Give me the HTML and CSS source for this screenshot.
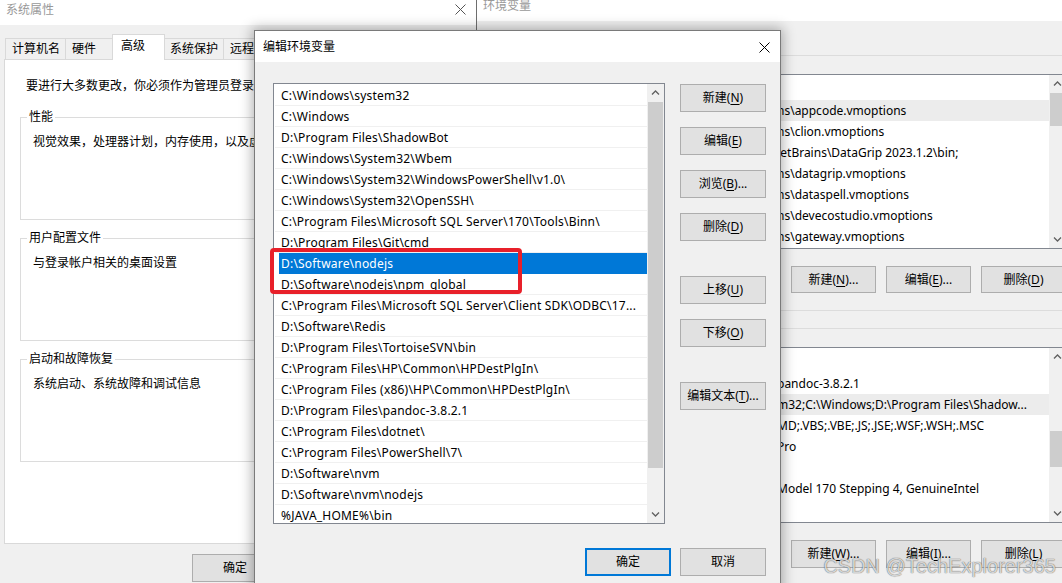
FILE: index.html
```html
<!DOCTYPE html>
<html lang="zh-CN">
  <head>
    <meta charset="UTF-8" />
    <meta name="viewport" content="width=device-width, initial-scale=1.0" />
    <title>编辑环境变量</title>
    <link rel="stylesheet" href="styles.css">
  </head>
  <body>
    <!-- 系统属性 -->
    <section class="win sys">
      <div class="titlebar">
        <span>系统属性</span>
        <svg class="close" width="11" height="11" viewBox="0 0 11 11"><path d="M0.5 0.5 10.5 10.5M10.5 0.5 0.5 10.5" stroke="#555" stroke-width="1"/></svg>
      </div>
      <div class="tabs">
        <div class="tab">计算机名</div>
        <div class="tab">硬件</div>
        <div class="tab active">高级</div>
        <div class="tab">系统保护</div>
        <div class="tab">远程</div>
      </div>
      <div class="panel">
        <p class="intro">要进行大多数更改，你必须作为管理员登录。</p>
        <fieldset class="group">
          <legend>性能</legend>
          <p>视觉效果，处理器计划，内存使用，以及虚拟内存</p>
        </fieldset>
        <fieldset class="group">
          <legend>用户配置文件</legend>
          <p>与登录帐户相关的桌面设置</p>
        </fieldset>
        <fieldset class="group">
          <legend>启动和故障恢复</legend>
          <p>系统启动、系统故障和调试信息</p>
        </fieldset>
      </div>
      <div class="sys-foot">
        <button class="btn wide">确定</button>
      </div>
    </section>

    <!-- 环境变量 -->
    <section class="win env">
      <div class="titlebar">
        <span>环境变量</span>
      </div>
      <div class="env-group first">
        <div class="vlist upper">
          <div class="vrows">
            <div class="vhead"><span class="vname">变量</span><span>值</span></div>
            <div class="vrow hl"><span class="vname">APPCODE_VM_OPTIONS</span><span>ns\appcode.vmoptions</span></div>
            <div class="vrow"><span class="vname">CLION_VM_OPTIONS</span><span>ns\clion.vmoptions</span></div>
            <div class="vrow"><span class="vname">DataGrip</span><span>JetBrains\DataGrip 2023.1.2\bin;</span></div>
            <div class="vrow"><span class="vname">DATAGRIP_VM_OPTIONS</span><span>ns\datagrip.vmoptions</span></div>
            <div class="vrow"><span class="vname">DATASPELL_VM_OPTIONS</span><span>ns\dataspell.vmoptions</span></div>
            <div class="vrow"><span class="vname">DEVECOSTUDIO_VM_OPTIONS</span><span>ns\devecostudio.vmoptions</span></div>
            <div class="vrow"><span class="vname">GATEWAY_VM_OPTIONS</span><span>ns\gateway.vmoptions</span></div>
          </div>
          <div class="sbar">
            <div class="arrow"><svg width="9" height="5" viewBox="0 0 9 5"><path d="M1 4.5 4.5 1 8 4.5" fill="none" stroke="#606060" stroke-width="1.3"/></svg></div>
            <div class="track"><div class="thumb t-upper"></div></div>
            <div class="arrow"><svg width="9" height="5" viewBox="0 0 9 5"><path d="M1 0.5 4.5 4 8 0.5" fill="none" stroke="#606060" stroke-width="1.3"/></svg></div>
          </div>
        </div>
        <div class="env-btns">
          <button class="btn">新建(<u>N</u>)...</button>
          <button class="btn">编辑(<u>E</u>)...</button>
          <button class="btn">删除(<u>D</u>)</button>
        </div>
      </div>
      <div class="env-group">
        <div class="vlist lower">
          <div class="vrows">
            <div class="vhead"><span class="vname">变量</span><span>值</span></div>
            <div class="vrow"><span class="vname">PANDOC_HOME</span><span>pandoc-3.8.2.1</span></div>
            <div class="vrow hl"><span class="vname">Path</span><span>m32;C:\Windows;D:\Program Files\Shadow...</span></div>
            <div class="vrow"><span class="vname">PATHEXT</span><span>MD;.VBS;.VBE;.JS;.JSE;.WSF;.WSH;.MSC</span></div>
            <div class="vrow"><span class="vname">POWERSHELL_DISTRIBUTION_CHANNEL</span><span>Pro</span></div>
            <div class="vrow"><span class="vname">PROCESSOR_ARCHITECTURE</span><span></span></div>
            <div class="vrow"><span class="vname">PROCESSOR_IDENTIFIER</span><span>Model 170 Stepping 4, GenuineIntel</span></div>
            <div class="vrow"><span class="vname">PROCESSOR_LEVEL</span><span></span></div>
          </div>
          <div class="sbar">
            <div class="arrow"><svg width="9" height="5" viewBox="0 0 9 5"><path d="M1 4.5 4.5 1 8 4.5" fill="none" stroke="#606060" stroke-width="1.3"/></svg></div>
            <div class="track"><div class="thumb t-lower"></div></div>
            <div class="arrow"><svg width="9" height="5" viewBox="0 0 9 5"><path d="M1 0.5 4.5 4 8 0.5" fill="none" stroke="#606060" stroke-width="1.3"/></svg></div>
          </div>
        </div>
        <div class="env-btns tall">
          <button class="btn">新建(<u>W</u>)...</button>
          <button class="btn">编辑(<u>I</u>)...</button>
          <button class="btn">删除(<u>L</u>)</button>
        </div>
      </div>
    </section>

    <!-- 编辑环境变量 -->
    <section class="dlg">
      <div class="dlg-title">
        <span>编辑环境变量</span>
        <svg class="close" width="11" height="11" viewBox="0 0 11 11"><path d="M0.5 0.5 10.5 10.5M10.5 0.5 0.5 10.5" stroke="#000" stroke-width="1"/></svg>
      </div>
      <div class="dlg-body">
        <div class="plist">
          <ul class="prows">
            <li>C:\Windows\system32</li>
            <li>C:\Windows</li>
            <li>D:\Program Files\ShadowBot</li>
            <li>C:\Windows\System32\Wbem</li>
            <li>C:\Windows\System32\WindowsPowerShell\v1.0\</li>
            <li>C:\Windows\System32\OpenSSH\</li>
            <li>C:\Program Files\Microsoft SQL Server\170\Tools\Binn\</li>
            <li>D:\Program Files\Git\cmd</li>
            <li class="sel">D:\Software\nodejs</li>
            <li>D:\Software\nodejs\npm_global</li>
            <li>C:\Program Files\Microsoft SQL Server\Client SDK\ODBC\17...</li>
            <li>D:\Software\Redis</li>
            <li>D:\Program Files\TortoiseSVN\bin</li>
            <li>C:\Program Files\HP\Common\HPDestPlgIn\</li>
            <li>C:\Program Files (x86)\HP\Common\HPDestPlgIn\</li>
            <li>D:\Program Files\pandoc-3.8.2.1</li>
            <li>C:\Program Files\dotnet\</li>
            <li>C:\Program Files\PowerShell\7\</li>
            <li>D:\Software\nvm</li>
            <li>D:\Software\nvm\nodejs</li>
            <li>%JAVA_HOME%\bin</li>
          </ul>
          <div class="sbar">
            <div class="arrow"><svg width="9" height="5" viewBox="0 0 9 5"><path d="M1 4.5 4.5 1 8 4.5" fill="none" stroke="#606060" stroke-width="1.3"/></svg></div>
            <div class="track"><div class="thumb t-path"></div></div>
            <div class="arrow"><svg width="9" height="5" viewBox="0 0 9 5"><path d="M1 0.5 4.5 4 8 0.5" fill="none" stroke="#606060" stroke-width="1.3"/></svg></div>
          </div>
        </div>
        <div class="side">
          <button class="btn">新建(<u>N</u>)</button>
          <button class="btn">编辑(<u>E</u>)</button>
          <button class="btn">浏览(<u>B</u>)...</button>
          <button class="btn">删除(<u>D</u>)</button>
          <button class="btn gap-lg">上移(<u>U</u>)</button>
          <button class="btn">下移(<u>O</u>)</button>
          <button class="btn gap-lg">编辑文本(<u>T</u>)...</button>
        </div>
      </div>
      <div class="dlg-foot">
        <button class="btn default">确定</button>
        <button class="btn">取消</button>
      </div>
    </section>

    <!-- 标注 -->
    <div class="mark"></div>
    <div class="watermark">CSDN @TechExplorer365</div>
  </body>
</html>
```

FILE: styles.css
```css
* {
  margin: 0;
  padding: 0;
  box-sizing: border-box;
}

ul {
  list-style: none;
}

body {
  width: 1062px;
  height: 583px;
  overflow: hidden;
  position: relative;
  background: #f0f0f0;
  color: #000;
  font: 12px/16px "Noto Sans", "Noto Sans CJK SC", sans-serif;
}

.btn {
  font: inherit;
  color: #000;
  background: #e1e1e1;
  border: 1px solid #adadad;
  width: 86px;
  height: 28px;
}

.btn u {
  text-decoration-thickness: 1px;
  text-underline-offset: 2px;
}

/* 窗口 */
.win {
  position: absolute;
  background: #f0f0f0;
  overflow: hidden;
}

.titlebar {
  height: 25px;
  background: #fff;
  color: #999;
  display: flex;
  justify-content: space-between;
  align-items: flex-start;
  padding: 2px 10px 0 6px;
}

.titlebar .close {
  margin-top: 2px;
}

/* 系统属性 */
.sys {
  left: 0;
  top: 0;
  width: 476px;
  height: 600px;
}

.tabs {
  display: flex;
  align-items: flex-end;
  height: 25px;
  margin: 9px 0 0 5px;
}

.tab {
  height: 21px;
  line-height: 20px;
  padding-left: 6px;
  background: #f0f0f0;
  border: 1px solid #d9d9d9;
  border-bottom: none;
  margin-left: -1px;
}

.tab:nth-child(1) { width: 61px; margin-left: 0; }
.tab:nth-child(2) { width: 48px; }
.tab:nth-child(4) { width: 60px; padding-left: 5px; }
.tab:nth-child(5) { width: 60px; }

.tab.active {
  width: 53px;
  height: 26px;
  padding-left: 8px;
  line-height: 22px;
  background: #fff;
  margin-bottom: -1px;
  position: relative;
  z-index: 1;
}

.panel {
  margin-left: 4px;
  width: 462px;
  height: 485px;
  background: #fff;
  border: 1px solid #d9d9d9;
  padding: 18px 15px 0;
}

.intro {
  margin-left: 6px;
  white-space: nowrap;
}

.group {
  height: 111px;
  border: 1px solid #dcdcdc;
  padding: 0 0 0 12px;
  margin-top: 10px;
  white-space: nowrap;
}

.intro + .group {
  margin-top: 15px;
}

.group legend {
  margin-left: -6px;
  padding: 0 2px;
}

.group p {
  margin-top: 9px;
}

.sys-foot {
  padding: 10px 0 0 192px;
}

.btn.wide {
  height: 28px;
}

/* 环境变量 */
.env {
  left: 476px;
  top: -4px;
  width: 610px;
  height: 600px;
  border-left: 1px solid #6e6e6e;
}

.env-group {
  margin: 34px 10px 0;
  border: 1px solid #dcdcdc;
  padding: 18px 8px 17px 1px;
}

.env-group + .env-group {
  margin-top: 17px;
}

.vlist {
  display: flex;
  background: #fff;
  border: 1px solid #828790;
  overflow: hidden;
}

.vlist.upper {
  height: 175px;
}

.vlist.lower {
  height: 176px;
}

.vrows {
  flex: 1;
  overflow: hidden;
}

.vhead {
  height: 25px;
  display: flex;
  align-items: center;
  color: #fff;
}

.vrow {
  height: 21px;
  display: flex;
  align-items: center;
  white-space: nowrap;
}

.vrow.hl {
  background: #ececec;
}

.vname {
  width: 287px;
  flex: none;
  padding-left: 6px;
}

.env-btns {
  display: flex;
  justify-content: flex-end;
  gap: 10px;
  margin-top: 17px;
  padding-right: 1px;
}

.env-btns .btn {
  width: 85px;
  height: 27px;
}

.env-btns.tall .btn {
  height: 28px;
}

/* 滚动条 */
.sbar {
  width: 17px;
  flex: none;
  display: flex;
  flex-direction: column;
  background: #f0f0f0;
}

.arrow {
  height: 17px;
  display: flex;
  align-items: center;
  justify-content: center;
}

.track {
  flex: 1;
}

.thumb {
  margin: 0 1px;
  background: #cdcdcd;
}

.t-upper { margin-top: 1px; height: 33px; }
.t-lower { margin-top: 66px; height: 36px; }
.t-path { margin-top: 1px; height: 366px; }

/* 编辑环境变量 */
.dlg {
  position: absolute;
  left: 254px;
  top: 30px;
  width: 527px;
  height: 570px;
  background: #f0f0f0;
  border: 1px solid #7a7a7a;
  box-shadow: 0 0 12px 2px rgba(0, 0, 0, 0.3);
  z-index: 2;
}

.dlg-title {
  height: 31px;
  background: #fff;
  display: flex;
  justify-content: space-between;
  align-items: flex-start;
  padding: 8px 10px 0 8px;
}

.dlg-title .close {
  margin-top: 3px;
}

.dlg-body {
  display: flex;
  gap: 15px;
  padding: 21px 14px 0 18px;
}

.plist {
  width: 392px;
  height: 441px;
  display: flex;
  background: #fff;
  border: 1px solid #828790;
  overflow: hidden;
}

.prows {
  flex: 1;
  padding: 1px 0 0 1px;
  overflow: hidden;
}

.prows li {
  height: 21px;
  line-height: 22px;
  padding-left: 6px;
  letter-spacing: 0.2px;
  border-bottom: 1px solid #f0f0f0;
  white-space: nowrap;
  overflow: hidden;
}

.prows li.sel {
  background: #0078d7;
  color: #fff;
  margin-left: 4px;
  padding-left: 2px;
  border-bottom-color: #0078d7;
}

.side {
  display: flex;
  flex-direction: column;
  gap: 15px;
  padding-top: 1px;
}

.side .gap-lg {
  margin-top: 20px;
}

.dlg-foot {
  display: flex;
  justify-content: flex-end;
  gap: 9px;
  margin-top: 24px;
  padding-right: 14px;
}

.btn.default {
  border: 2px solid #0078d7;
}

/* 红框标注 */
.mark {
  position: absolute;
  left: 270px;
  top: 248px;
  width: 252px;
  height: 46px;
  border: 4px solid #e8202a;
  border-radius: 4px;
  z-index: 3;
}

.watermark {
  position: absolute;
  right: 6px;
  top: 554px;
  font: 20px/24px "Liberation Sans", sans-serif;
  color: rgba(255, 255, 255, 0.75);
  text-shadow: 0 0 1px rgba(0, 0, 0, 0.55), 0 0 1px rgba(0, 0, 0, 0.35);
  z-index: 4;
}
```
